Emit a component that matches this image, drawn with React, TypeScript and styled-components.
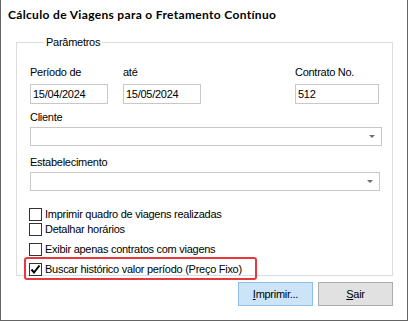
import React from "react";
import styled, { createGlobalStyle } from "styled-components";

const Global = createGlobalStyle`
  html, body { margin: 0; padding: 0; background: #ffffff; }
  body { font-family: "Liberation Sans", Arial, sans-serif; font-size: 11px; color: #000; letter-spacing: -0.27px; }
  * { box-sizing: border-box; }
`;

const Window = styled.div`
  width: 408px;
  height: 321px;
  background: #ffffff;
  border-left: 1px solid #646464;
  border-right: 1px solid #646464;
  border-bottom: 1px solid #646464;
  display: flex;
  flex-direction: column;
`;

const Title = styled.h1`
  margin: 0;
  padding: 7px 0 0 7px;
  height: 24px;
  font-family: Lato, "Liberation Sans", sans-serif;
  font-weight: 700;
  font-size: 12px;
  letter-spacing: 0.33px;
  line-height: 16px;
  color: #000;
`;

const Group = styled.fieldset`
  margin: 12px 0 0 15px;
  width: 377px;
  height: 240px;
  padding: 16px 0 0 13px;
  border: 1px solid #dcdcdc;
  position: relative;
`;

const Legend = styled.legend`
  padding: 0 2px;
  margin-left: 14px;
  line-height: 13px;
  font-size: 11px;
`;

const TopGrid = styled.div`
  display: grid;
  grid-template-columns: 78px 78px 64px 84px;
  column-gap: 15px;
  row-gap: 5px;
  margin-top: 1px;
`;

const Label = styled.div<{ $mt?: number }>`
  line-height: 13px;
  height: 13px;
  margin-top: ${(p) => p.$mt ?? 0}px;
`;

const TextBox = styled.div`
  width: 100%;
  height: 20px;
  border: 1px solid #c8c8c8;
  padding: 2px 0 0 2px;
  line-height: 14px;
  background: #fff;
`;

const Spacer = styled.div``;

const Combo = styled.div<{ $w: number }>`
  width: ${(p) => p.$w}px;
  height: 19px;
  margin-top: 3px;
  border: 1px solid #c8c8c8;
  background: #fff;
  display: flex;
  align-items: center;
  justify-content: flex-end;
  padding-right: 6px;
`;

const Arrow = styled.span`
  width: 0;
  height: 0;
  border-left: 3px solid transparent;
  border-right: 3px solid transparent;
  border-top: 3px solid #6d6d6d;
`;

const CheckRow = styled.label<{ $mt: number }>`
  display: flex;
  align-items: center;
  gap: 3px;
  height: 13px;
  margin-top: ${(p) => p.$mt}px;
  margin-left: -1px;
  position: relative;
  line-height: 13px;
`;

const Box = styled.span`
  width: 13px;
  height: 13px;
  border: 1px solid #333333;
  background: #fff;
  display: flex;
  align-items: center;
  justify-content: center;
  flex: none;
`;

const Highlight = styled.span`
  position: absolute;
  left: -5px;
  top: -6px;
  width: 233px;
  height: 23px;
  border: 2px solid #e8383d;
  border-radius: 3px;
  pointer-events: none;
`;

const Buttons = styled.div`
  display: flex;
  justify-content: flex-end;
  gap: 5px;
  padding: 6px 14px 0 0;
`;

const Button = styled.button<{ $primary?: boolean }>`
  width: 75px;
  height: 24px;
  font-family: "Liberation Sans", Arial, sans-serif;
  font-size: 11px;
  letter-spacing: -0.27px;
  color: #000;
  background: ${(p) => (p.$primary ? "#cce4f7" : "#e1e1e1")};
  border: 1px solid ${(p) => (p.$primary ? "#8dbfe8" : "#adadad")};
  padding: 0;
  u { text-decoration: underline; }
`;

const Check = () => (
  <svg width="11" height="11" viewBox="0 0 11 11">
    <path d="M1.5 5.5 L4 8.5 L9.5 1.5" fill="none" stroke="#000" strokeWidth="2" />
  </svg>
);

export default function App() {
  return (
    <>
      <Global />
      <Window>
        <Title>Cálculo de Viagens para o Fretamento Contínuo</Title>
        <Group>
          <Legend>Parâmetros</Legend>
          <TopGrid>
            <Label>Período de</Label>
            <Label>até</Label>
            <Spacer />
            <Label>Contrato No.</Label>
            <TextBox>15/04/2024</TextBox>
            <TextBox>15/05/2024</TextBox>
            <Spacer />
            <TextBox>512</TextBox>
          </TopGrid>
          <Label $mt={7}>Cliente</Label>
          <Combo $w={352}><Arrow /></Combo>
          <Label $mt={10}>Estabelecimento</Label>
          <Combo $w={350}><Arrow /></Combo>
          <CheckRow $mt={17}><Box />Imprimir quadro de viagens realizadas</CheckRow>
          <CheckRow $mt={2}><Box />Detalhar horários</CheckRow>
          <CheckRow $mt={7}><Box />Exibir apenas contratos com viagens</CheckRow>
          <CheckRow $mt={7}>
            <Box><Check /></Box>Buscar histórico valor período (Preço Fixo)
            <Highlight />
          </CheckRow>
        </Group>
        <Buttons>
          <Button $primary><u>I</u>mprimir...</Button>
          <Button><u>S</u>air</Button>
        </Buttons>
      </Window>
    </>
  );
}
